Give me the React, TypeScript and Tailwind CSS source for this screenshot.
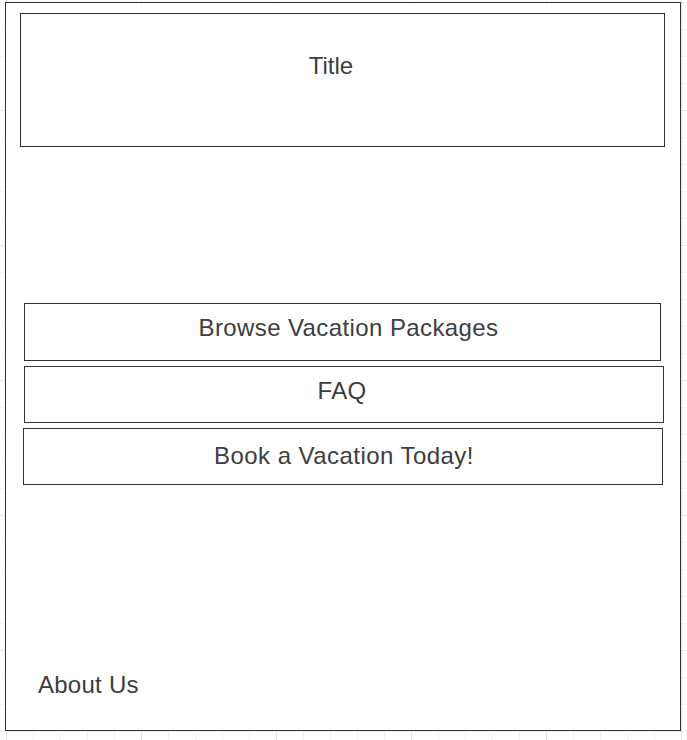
import React from 'react';

const font = { fontFamily: '"Liberation Sans", Arial, sans-serif' };

export default function App() {
  return (
    <div
      className="w-[687px] h-[740px] overflow-hidden bg-white pt-[2px] pl-[5px] bg-[linear-gradient(to_right,#e4e4e4_1px,transparent_1px),linear-gradient(to_bottom,#e4e4e4_1px,transparent_1px),linear-gradient(to_right,#f2f2f2_1px,transparent_1px),linear-gradient(to_bottom,#f2f2f2_1px,transparent_1px)] bg-[size:135px_135px,135px_135px,27px_27px,27px_27px] bg-[position:6px_110px,6px_110px,6px_2px,6px_2px]"
      style={font}
    >
      {/* page frame */}
      <div className="w-[676px] h-[729px] border border-[#333] bg-white flex flex-col text-[24px] leading-[28px] text-[#3d3d3d]">
        <div className="ml-[14px] mt-[10px] w-[645px] h-[134px] border border-[#333] pt-[38px] pr-[23px] text-center">
          Title
        </div>

        <div className="ml-[18px] mt-[156px] w-[637px] h-[58px] border border-[#333] pt-[10px] pl-[12px] text-center tracking-[0.4px]">
          Browse Vacation Packages
        </div>
        <div className="ml-[18px] mt-[5px] w-[640px] h-[57px] border border-[#333] pt-[10px] pr-[4px] text-center tracking-[0.4px]">
          FAQ
        </div>
        <div className="ml-[17px] mt-[5px] w-[640px] h-[57px] border border-[#333] pt-[13px] pl-[2px] text-center tracking-[0.45px]">
          Book a Vacation Today!
        </div>

        <div className="mt-auto mb-[31px] ml-[32px] tracking-[0.25px]">About Us</div>
      </div>
    </div>
  );
}
